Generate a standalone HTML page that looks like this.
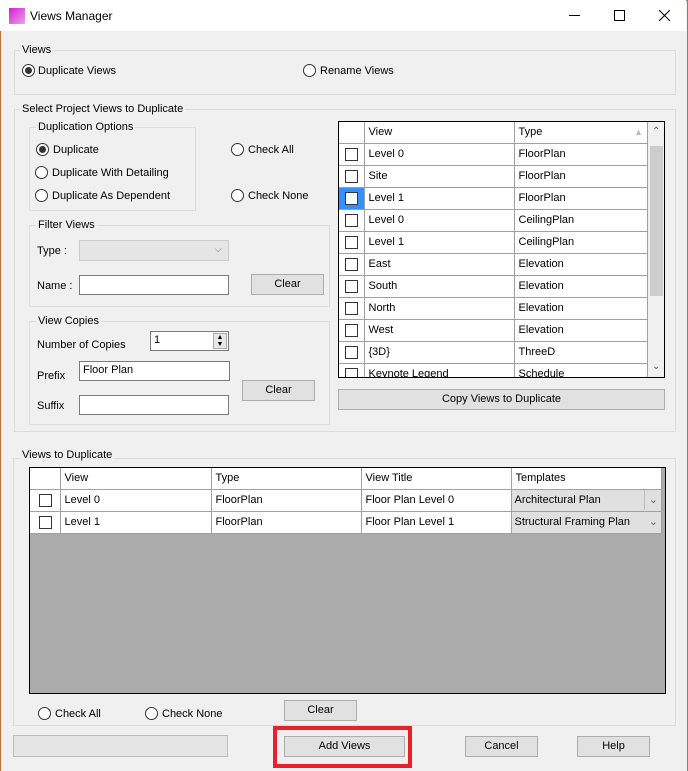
<!DOCTYPE html>
<html><head><meta charset="utf-8"><style>
*{box-sizing:border-box;margin:0;padding:0}
body{width:688px;height:771px;overflow:hidden;background:#f0f0f0;font-family:"Liberation Sans",sans-serif;font-size:11px;color:#000;position:relative}
.a{position:absolute}
.win{position:absolute;left:0;top:0;width:688px;height:771px;border:1px solid #c0703a;border-bottom:none}
.title{position:absolute;left:0;top:0;width:686px;height:31px;background:#fff}
.grp{position:absolute;border:1px solid #dcdcdc}
.gl{position:absolute;background:#f0f0f0;padding:0 2px;line-height:13px}
.rad{position:absolute;width:13px;height:13px;border:1px solid #333;border-radius:50%;background:#fff}
.rad.on::after{content:"";position:absolute;left:2px;top:2px;width:7px;height:7px;border-radius:50%;background:#333}
.t{position:absolute;white-space:nowrap;line-height:14px}
.btn{position:absolute;border:1px solid #adadad;background:#e1e1e1;text-align:center;line-height:18px}
.inp{position:absolute;border:1px solid #7a7a7a;background:#fff;padding-left:3px;line-height:17px}
.cb{position:absolute;width:13px;height:13px;border:1px solid #333;background:#fff}
table{border-collapse:collapse;position:absolute;table-layout:fixed}
td{border:1px solid #a0a0a0;height:22px;padding:0 4px;white-space:nowrap;overflow:hidden;line-height:20px}
tr.h td{height:21px}
</style></head><body>
<div class="win"></div>
<div class="title">
 <div class="a" style="left:9px;top:8px;width:16px;height:16px;background:linear-gradient(135deg,#d020d0,#f0a0f0)"></div>
 <div class="t" style="left:30px;top:9px;font-size:12px">Views Manager</div>
 <div class="a" style="left:569px;top:15px;width:11px;height:1px;background:#000"></div>
 <div class="a" style="left:614px;top:10px;width:11px;height:11px;border:1px solid #000"></div>
 <svg class="a" style="left:659px;top:10px" width="11" height="11"><path d="M0 0L11 11M11 0L0 11" stroke="#000" stroke-width="1.1"/></svg>
</div>

<div class="grp" style="left:14px;top:50px;width:662px;height:45px"></div>
<div class="gl" style="left:20px;top:44px">Views</div>
<div class="rad on" style="left:22px;top:64px"></div><div class="t" style="left:38px;top:64px">Duplicate Views</div>
<div class="rad" style="left:303px;top:64px"></div><div class="t" style="left:320px;top:64px">Rename Views</div>

<div class="grp" style="left:14px;top:109px;width:662px;height:323px"></div>
<div class="gl" style="left:20px;top:103px">Select Project Views to Duplicate</div>

<div class="grp" style="left:29px;top:127px;width:167px;height:84px"></div>
<div class="gl" style="left:36px;top:121px">Duplication Options</div>
<div class="rad on" style="left:36px;top:143px"></div><div class="t" style="left:53px;top:143px">Duplicate</div>
<div class="rad" style="left:35px;top:166px"></div><div class="t" style="left:52px;top:166px">Duplicate With Detailing</div>
<div class="rad" style="left:35px;top:189px"></div><div class="t" style="left:52px;top:189px">Duplicate As Dependent</div>
<div class="rad" style="left:231px;top:143px"></div><div class="t" style="left:248px;top:143px">Check All</div>
<div class="rad" style="left:231px;top:189px"></div><div class="t" style="left:248px;top:189px">Check None</div>

<div class="grp" style="left:29px;top:225px;width:301px;height:82px"></div>
<div class="gl" style="left:36px;top:219px">Filter Views</div>
<div class="t" style="left:37px;top:244px">Type :</div>
<div class="a" style="left:79px;top:240px;width:150px;height:21px;border:1px solid #ccc;background:#e5e5e5"><span class="t" style="right:6px;top:2px;color:#777;font-size:10px">⌵</span></div>
<div class="t" style="left:37px;top:279px">Name :</div>
<div class="inp" style="left:79px;top:275px;width:150px;height:20px"></div>
<div class="btn" style="left:251px;top:274px;width:73px;height:21px">Clear</div>

<div class="grp" style="left:29px;top:321px;width:301px;height:104px"></div>
<div class="gl" style="left:36px;top:315px">View Copies</div>
<div class="t" style="left:37px;top:338px">Number of Copies</div>
<div class="inp" style="left:150px;top:331px;width:79px;height:20px">1</div>
<div class="a" style="left:213px;top:333px;width:14px;height:16px;border:1px solid #aaa;background:#e8e8e8;font-size:7px;line-height:7px;text-align:center">▲<br>▼</div>
<div class="t" style="left:37px;top:369px">Prefix</div>
<div class="inp" style="left:79px;top:361px;width:151px;height:20px">Floor Plan</div>
<div class="btn" style="left:242px;top:380px;width:73px;height:21px">Clear</div>
<div class="t" style="left:37px;top:399px">Suffix</div>
<div class="inp" style="left:79px;top:395px;width:150px;height:20px"></div>

<div class="a" style="left:338px;top:121px;width:327px;height:257px;border:1px solid #000;background:#fff;overflow:hidden">
<table style="left:0;top:0;width:309px">
<colgroup><col style="width:25px"><col style="width:150px"><col></colgroup>
<tr class="h"><td style="border-top:none;border-left:none"></td><td style="border-top:none">View</td><td style="border-top:none">Type<span style="float:right;color:#bbb;font-size:9px">▲</span></td></tr>
<tr><td style="border-left:none"><div class="cb" style="position:relative;left:2px"></div></td><td>Level 0</td><td>FloorPlan</td></tr>
<tr><td style="border-left:none"><div class="cb" style="position:relative;left:2px"></div></td><td>Site</td><td>FloorPlan</td></tr>
<tr><td style="border-left:none;background:#3390ff"><div class="cb" style="position:relative;left:2px"></div></td><td>Level 1</td><td>FloorPlan</td></tr>
<tr><td style="border-left:none"><div class="cb" style="position:relative;left:2px"></div></td><td>Level 0</td><td>CeilingPlan</td></tr>
<tr><td style="border-left:none"><div class="cb" style="position:relative;left:2px"></div></td><td>Level 1</td><td>CeilingPlan</td></tr>
<tr><td style="border-left:none"><div class="cb" style="position:relative;left:2px"></div></td><td>East</td><td>Elevation</td></tr>
<tr><td style="border-left:none"><div class="cb" style="position:relative;left:2px"></div></td><td>South</td><td>Elevation</td></tr>
<tr><td style="border-left:none"><div class="cb" style="position:relative;left:2px"></div></td><td>North</td><td>Elevation</td></tr>
<tr><td style="border-left:none"><div class="cb" style="position:relative;left:2px"></div></td><td>West</td><td>Elevation</td></tr>
<tr><td style="border-left:none"><div class="cb" style="position:relative;left:2px"></div></td><td>{3D}</td><td>ThreeD</td></tr>
<tr><td style="border-left:none"><div class="cb" style="position:relative;left:2px"></div></td><td>Keynote Legend</td><td>Schedule</td></tr>
</table>
<div class="a" style="left:309px;top:0;width:17px;height:256px;background:#f0f0f0"></div>
<div class="a" style="left:311px;top:24px;width:13px;height:150px;background:#cdcdcd"></div>
<div class="t" style="left:313px;top:3px;font-size:10px;color:#555">⌃</div>
<div class="t" style="left:313px;top:238px;font-size:10px;color:#555">⌄</div>
</div>
<div class="btn" style="left:338px;top:389px;width:327px;height:21px">Copy Views to Duplicate</div>

<div class="grp" style="left:13px;top:458px;width:663px;height:268px"></div>
<div class="gl" style="left:20px;top:449px">Views to Duplicate</div>
<div class="a" style="left:29px;top:467px;width:637px;height:227px;border:1px solid #000;background:#ababab;overflow:hidden">
<table style="left:0;top:0;width:632px;background:#fff">
<colgroup><col style="width:30px"><col style="width:151px"><col style="width:150px"><col style="width:150px"><col></colgroup>
<tr class="h"><td style="border-top:none;border-left:none"></td><td style="border-top:none">View</td><td style="border-top:none">Type</td><td style="border-top:none">View Title</td><td style="border-top:none">Templates</td></tr>
<tr><td style="border-left:none"><div class="cb" style="position:relative;left:5px"></div></td><td>Level 0</td><td>FloorPlan</td><td>Floor Plan Level 0</td><td style="background:#e0e0e0;padding:0 3px">Architectural Plan<span style="float:right;color:#666;border-left:1px solid #bbb;padding-left:4px">⌄</span></td></tr>
<tr><td style="border-left:none"><div class="cb" style="position:relative;left:5px"></div></td><td>Level 1</td><td>FloorPlan</td><td>Floor Plan Level 1</td><td style="background:#e0e0e0;padding:0 3px">Structural Framing Plan<span style="float:right;color:#666;padding-left:4px">⌄</span></td></tr>
</table>
</div>
<div class="rad" style="left:38px;top:707px"></div><div class="t" style="left:55px;top:707px">Check All</div>
<div class="rad" style="left:145px;top:707px"></div><div class="t" style="left:162px;top:707px">Check None</div>
<div class="btn" style="left:284px;top:700px;width:73px;height:21px">Clear</div>

<div class="a" style="left:13px;top:735px;width:215px;height:22px;border:1px solid #bcbcbc;background:#e5e5e5"></div>
<div class="a" style="left:273px;top:726px;width:139px;height:42px;border:4px solid #e8202a"></div>
<div class="btn" style="left:284px;top:736px;width:121px;height:21px">Add Views</div>
<div class="btn" style="left:465px;top:736px;width:73px;height:21px">Cancel</div>
<div class="btn" style="left:577px;top:736px;width:73px;height:21px">Help</div>
</body></html>
